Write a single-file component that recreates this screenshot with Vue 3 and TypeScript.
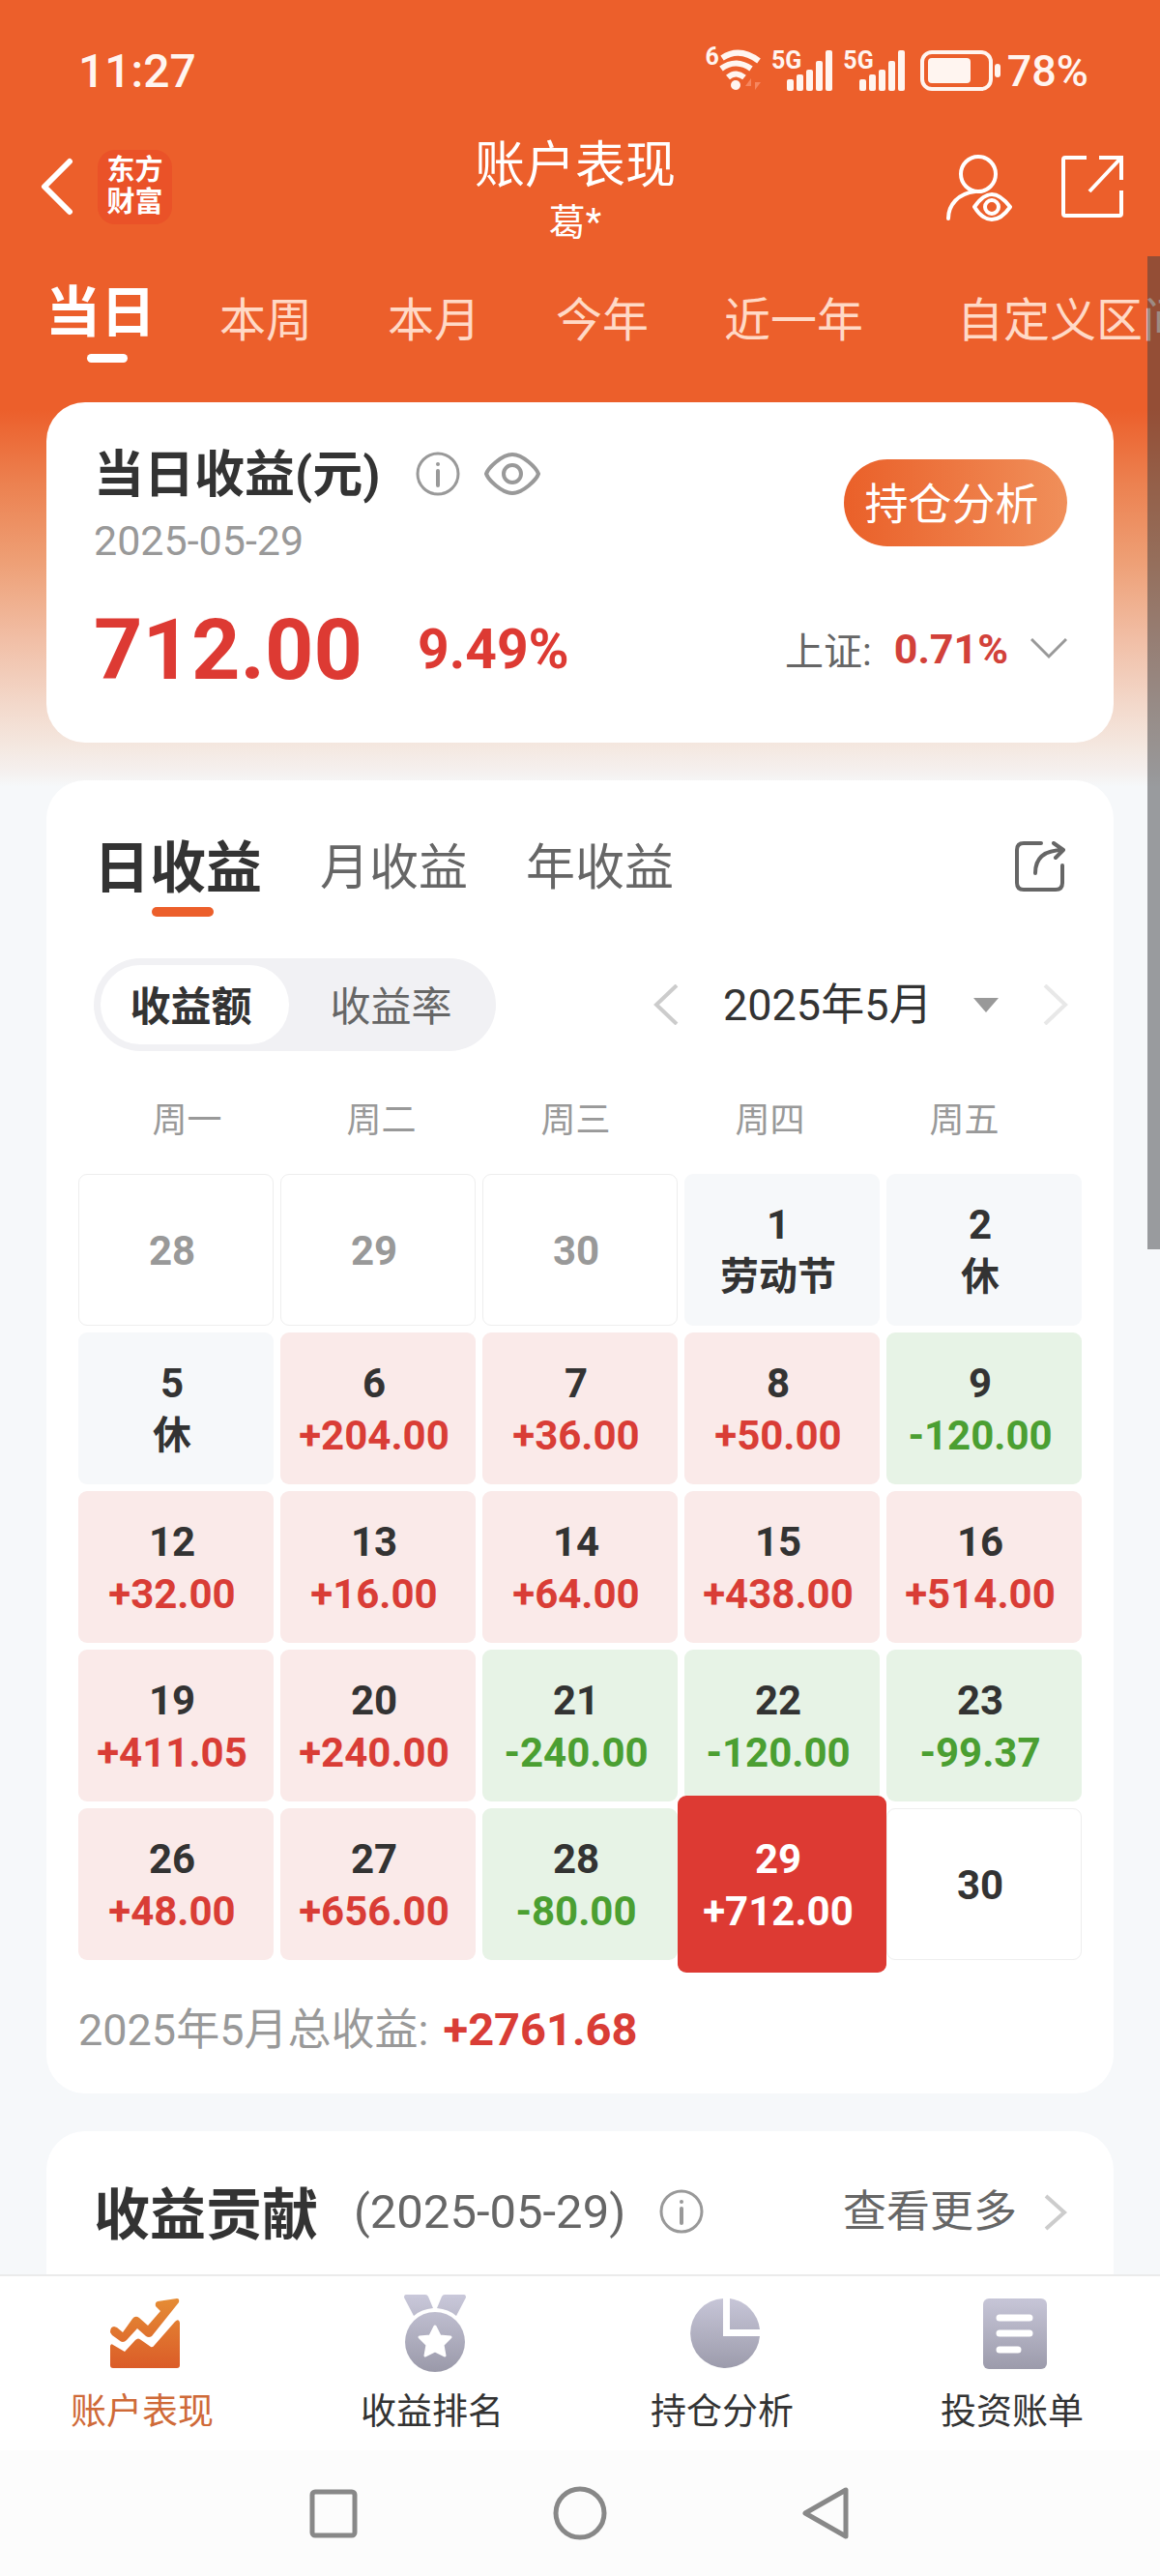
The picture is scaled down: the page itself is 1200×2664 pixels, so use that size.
<script setup lang="ts">
import { ref } from 'vue'

type Kind = 'out' | 'rest' | 'gain' | 'loss' | 'future'

interface Day {
  day: number
  note?: string
  kind: Kind
}

const periods: string[] = ['当日', '本周', '本月', '今年', '近一年', '自定义区间']
const period = ref('当日')

const reports: string[] = ['日收益', '月收益', '年收益']
const report = ref('日收益')

const units: string[] = ['收益额', '收益率']
const unit = ref('收益额')

const months: string[] = ['2025年3月', '2025年4月', '2025年5月']
const month = ref('2025年5月')

const weekdays: string[] = ['周一', '周二', '周三', '周四', '周五']

const amount = (day: number, value: number): Day => ({
  day,
  note: (value > 0 ? '+' : '') + value.toFixed(2),
  kind: value > 0 ? 'gain' : 'loss',
})

const days: Day[] = [
  { day: 28, kind: 'out' },
  { day: 29, kind: 'out' },
  { day: 30, kind: 'out' },
  { day: 1, note: '劳动节', kind: 'rest' },
  { day: 2, note: '休', kind: 'rest' },
  { day: 5, note: '休', kind: 'rest' },
  amount(6, 204),
  amount(7, 36),
  amount(8, 50),
  amount(9, -120),
  amount(12, 32),
  amount(13, 16),
  amount(14, 64),
  amount(15, 438),
  amount(16, 514),
  amount(19, 411.05),
  amount(20, 240),
  amount(21, -240),
  amount(22, -120),
  amount(23, -99.37),
  amount(26, 48),
  amount(27, 656),
  amount(28, -80),
  amount(29, 712),
  { day: 30, kind: 'future' },
]
const selected = ref(23)

const menu: { label: string; icon: string }[] = [
  { label: '账户表现', icon: 'chart' },
  { label: '收益排名', icon: 'medal' },
  { label: '持仓分析', icon: 'pie' },
  { label: '投资账单', icon: 'bill' },
]
</script>

<template>
  <div class="page">
    <div class="status">
      <span class="clock">11:27</span>
      <div class="signals">
        <span class="wifi-gen">6</span>
        <svg class="wifi" width="44" height="44" viewBox="0 0 44 44" fill="none" stroke="currentColor" stroke-width="6">
          <path d="M3 9Q21-3 41 12" />
          <path d="M2 20Q17 9 33 20" />
          <path d="M9 29Q17 22 26 29" />
          <circle cx="17" cy="37" r="5" fill="currentColor" stroke="none" />
          <path d="M33 42V30L27 38H33M37 30v12l6-8h-6" stroke="none" fill="#f6875f" />
        </svg>
        <div v-for="n in 2" :key="n" class="cell-signal">
          <span class="gen">5G</span>
          <svg width="48" height="44" viewBox="0 0 48 44" fill="currentColor">
            <rect x="0" y="31" width="7" height="12" rx="2" />
            <rect x="10" y="26" width="7" height="17" rx="2" />
            <rect x="20" y="21" width="7" height="22" rx="2" />
            <rect x="30" y="12" width="7" height="31" rx="2" />
            <rect x="40" y="1" width="7" height="42" rx="2" />
          </svg>
        </div>
        <svg class="battery" width="84" height="44" viewBox="0 0 84 44">
          <rect x="2" y="3" width="71" height="38" rx="10" fill="none" stroke="currentColor" stroke-width="4" />
          <rect x="8" y="9" width="44" height="26" rx="4" fill="currentColor" />
          <rect x="77" y="15" width="6" height="14" rx="3" fill="currentColor" />
        </svg>
        <span class="percent">78%</span>
      </div>
    </div>

    <header class="header">
      <div class="side">
        <button class="plain" aria-label="返回">
          <svg width="34" height="60" viewBox="0 0 34 60" fill="none" stroke="currentColor" stroke-width="6" stroke-linecap="round" stroke-linejoin="round">
            <path d="M30 4L4 30l26 26" />
          </svg>
        </button>
        <div class="brand"><span>东方</span><span>财富</span></div>
      </div>
      <div class="heading">
        <h1>账户表现</h1>
        <span class="owner">葛*</span>
      </div>
      <div class="side end">
        <button class="plain" aria-label="账户">
          <svg width="75" height="75" viewBox="0 0 75 75" fill="none" stroke="currentColor" stroke-width="4" stroke-linecap="round">
            <circle cx="37" cy="24" r="18" />
            <path d="M34 42C16 44 6 56 6 70" />
            <path d="M33 58Q42 45 51 45T70 58Q61 71 51 71T33 58Z" stroke-linejoin="round" />
            <circle cx="51" cy="58" r="7" />
          </svg>
        </button>
        <button class="plain" aria-label="分享">
          <svg width="68" height="68" viewBox="0 0 68 68" fill="none" stroke="currentColor" stroke-width="4">
            <path d="M28 4H6Q4 4 4 6V62Q4 64 6 64H62Q64 64 64 62V38" />
            <path d="M41 4H64V27M31 39L63 5" />
          </svg>
        </button>
      </div>
    </header>

    <nav class="periods">
      <button
        v-for="p in periods"
        :key="p"
        class="plain period"
        :class="{ active: p === period, custom: p === '自定义区间' }"
        @click="period = p"
      >
        {{ p }}
      </button>
    </nav>

    <main class="cards">
      <section class="card summary">
        <div class="summary-top">
          <div class="summary-name">
            <div class="title-row">
              <h2 class="summary-title">当日收益(元)</h2>
              <button class="plain grey" aria-label="说明">
                <svg width="46" height="46" viewBox="0 0 46 46" fill="none" stroke="currentColor">
                  <circle cx="23" cy="23" r="21" stroke-width="3" />
                  <path d="M23 20V35" stroke-width="4" stroke-linecap="round" />
                  <circle cx="23" cy="13" r="2" fill="currentColor" stroke="none" />
                </svg>
              </button>
              <button class="plain grey" aria-label="隐藏金额">
                <svg width="60" height="46" viewBox="0 0 60 46" fill="none" stroke="currentColor" stroke-width="4">
                  <path d="M3 23C5 17 19 3 30 3S55 17 57 23C55 29 41 43 30 43S5 29 3 23Z" />
                  <circle cx="30" cy="23" r="9" />
                </svg>
              </button>
            </div>
            <time class="date">2025-05-29</time>
          </div>
          <button class="analyse">持仓分析</button>
        </div>
        <div class="figures">
          <strong class="total">712.00</strong>
          <strong class="rate">9.49%</strong>
          <button class="plain index">
            <span>上证:</span>
            <strong>0.71%</strong>
            <svg width="38" height="22" viewBox="0 0 38 22" fill="none" stroke="#999" stroke-width="3">
              <path d="M1 1L19 19L37 1" />
            </svg>
          </button>
        </div>
      </section>

      <section class="card report">
        <div class="report-tabs">
          <button
            v-for="r in reports"
            :key="r"
            class="plain report-tab"
            :class="{ active: r === report }"
            @click="report = r"
          >
            {{ r }}
          </button>
          <button class="plain share" aria-label="分享收益">
            <svg width="52" height="52" viewBox="0 0 52 52" fill="none" stroke="currentColor" stroke-width="4" stroke-linecap="round" stroke-linejoin="round">
              <path d="M27 2H9Q2 2 2 9V43Q2 50 9 50H42Q49 50 49 43V25" />
              <path d="M21 33Q21 9 50 9M40 2L50 9L42 17" />
            </svg>
          </button>
        </div>

        <div class="controls">
          <div class="segment">
            <button v-for="u in units" :key="u" class="plain unit" :class="{ active: u === unit }" @click="unit = u">
              {{ u }}
            </button>
          </div>
          <div class="month">
            <button class="plain" aria-label="上个月">
              <svg width="26" height="42" viewBox="0 0 26 42" fill="none" stroke="#ccc" stroke-width="4">
                <path d="M24 1L3 21L24 41" />
              </svg>
            </button>
            <label class="month-pick">
              <select v-model="month" aria-label="选择月份">
                <option v-for="m in months" :key="m">{{ m }}</option>
              </select>
              <svg width="26" height="15" viewBox="0 0 26 15"><path d="M0 0H26L13 15Z" fill="#999" /></svg>
            </label>
            <button class="plain" aria-label="下个月">
              <svg width="26" height="42" viewBox="0 0 26 42" fill="none" stroke="#e8e8e8" stroke-width="4">
                <path d="M2 1L23 21L2 41" />
              </svg>
            </button>
          </div>
        </div>

        <div class="weekdays">
          <span v-for="w in weekdays" :key="w">{{ w }}</span>
        </div>
        <div class="calendar">
          <button
            v-for="(d, i) in days"
            :key="i"
            class="plain day"
            :class="[d.kind, { selected: i === selected }]"
            @click="selected = i"
          >
            <span>{{ d.day }}</span>
            <span v-if="d.note" class="note">{{ d.note }}</span>
          </button>
        </div>
        <p class="sum">{{ month }}总收益: <strong>+2761.68</strong></p>
      </section>

      <section class="card contribution">
        <h2>收益贡献</h2>
        <span class="on-date">(2025-05-29)</span>
        <button class="plain grey" aria-label="说明">
          <svg width="46" height="46" viewBox="0 0 46 46" fill="none" stroke="currentColor">
            <circle cx="23" cy="23" r="21" stroke-width="3" />
            <path d="M23 20V35" stroke-width="4" stroke-linecap="round" />
            <circle cx="23" cy="13" r="2" fill="currentColor" stroke="none" />
          </svg>
        </button>
        <a class="more" href="#">
          查看更多
          <svg width="24" height="38" viewBox="0 0 24 38" fill="none" stroke="#ccc" stroke-width="4">
            <path d="M2 2L21 19L2 36" />
          </svg>
        </a>
      </section>
    </main>

    <nav class="menu">
      <a v-for="(m, i) in menu" :key="m.icon" href="#" :class="{ active: i === 0 }">
        <svg v-if="m.icon === 'chart'" width="74" height="80" viewBox="0 0 74 80">
          <defs>
            <linearGradient id="warm" x1="0" y1="0" x2="0" y2="1" gradientUnits="objectBoundingBox">
              <stop offset="0" stop-color="#e58c35" />
              <stop offset="1" stop-color="#db5c28" />
            </linearGradient>
          </defs>
          <path
            fill="url(#warm)"
            d="M1 39Q1 33 5 33L8 34L14 39L24 25Q27 21 31 24L40 32L53 17L48 12Q47 8 50 7L70 4Q73 4 72 8L44 43Q41 45 38 43L29 35L18 47Q14 51 10 47L3 42ZM1 53Q2 50 4 52L16 59L27 47Q30 44 33 47L43 54Q45 55 47 52L68 28Q72 24 73 29V73Q73 76 70 76H4Q1 76 1 73Z"
          />
        </svg>
        <svg v-else-if="m.icon === 'medal'" width="64" height="80" viewBox="0 0 64 80">
          <defs>
            <linearGradient id="cool" x1="0" y1="0" x2="0" y2="80" gradientUnits="userSpaceOnUse">
              <stop offset="0" stop-color="#c9c8da" />
              <stop offset="1" stop-color="#9a99a9" />
            </linearGradient>
          </defs>
          <path fill="url(#cool)" d="M2 0H22Q24 0 25 2L30 14Q18 15 10 22L0 3Q0 0 2 0ZM62 0H42Q40 0 39 2L34 14Q46 15 54 22L64 3Q64 0 62 0Z" />
          <circle cx="32" cy="49" r="31" fill="url(#cool)" />
          <path fill="#fff" stroke="#fff" stroke-width="3" stroke-linejoin="round" d="M32 33L37 43L48 44L40 52L42 63L32 58L22 63L24 52L16 44L27 43Z" />
        </svg>
        <svg v-else-if="m.icon === 'pie'" width="74" height="80" viewBox="0 0 74 80" fill="url(#cool)">
          <path d="M35 4A36 36 0 1 0 73 43H35Z" />
          <path d="M42 4A36 36 0 0 1 73 36H42Z" />
        </svg>
        <svg v-else width="66" height="80" viewBox="0 0 66 80">
          <rect y="4" width="66" height="73" rx="6" fill="url(#cool)" />
          <path d="M17 24H48M17 40H48M17 57H36" stroke="#fff" stroke-width="7" stroke-linecap="round" />
        </svg>
        <span>{{ m.label }}</span>
      </a>
    </nav>

    <div class="system">
      <button class="plain" aria-label="最近任务">
        <svg width="56" height="56" viewBox="0 0 56 56" fill="none" stroke="currentColor" stroke-width="5">
          <rect x="6" y="6" width="44" height="45" rx="3" />
        </svg>
      </button>
      <button class="plain" aria-label="主屏幕">
        <svg width="56" height="56" viewBox="0 0 56 56" fill="none" stroke="currentColor" stroke-width="5">
          <circle cx="28" cy="28" r="25" />
        </svg>
      </button>
      <button class="plain" aria-label="后退">
        <svg width="56" height="56" viewBox="0 0 56 56" fill="none" stroke="currentColor" stroke-width="5" stroke-linejoin="round">
          <path d="M6 28L48 4V52Z" />
        </svg>
      </button>
    </div>

    <div class="scrollbar"></div>
  </div>
</template>

<style>
body {
  margin: 0;
}
</style>

<style scoped>
.page {
  position: relative;
  display: flex;
  flex-direction: column;
  min-height: 100vh;
  overflow: hidden;
  color: #333;
  background: #f6f8fa linear-gradient(
    #ec5f2b 424px,
    #ec8150 500px,
    #ee9f75 580px,
    #f1bea5 660px,
    #f3dacd 733px,
    #f4e7df 770px,
    #f5f1f0 800px,
    #f6f8fa 814px
  ) no-repeat;
  font-family: Roboto, "Noto Sans CJK SC", sans-serif;
}
h1, h2, p {
  margin: 0;
}
svg {
  display: block;
  flex: none;
}
.plain {
  padding: 0;
  border: 0;
  background: none;
  color: inherit;
  font: inherit;
  white-space: nowrap;
  cursor: pointer;
}
.grey {
  color: #999;
}

.status {
  display: flex;
  align-items: center;
  justify-content: space-between;
  height: 134px;
  padding: 6px 74px 0 81px;
  color: #fff5f0;
}
.clock {
  font-size: 48px;
  font-weight: 500;
}
.signals {
  display: flex;
  align-items: center;
}
.wifi-gen, .gen {
  align-self: flex-start;
  font-size: 25px;
  font-weight: 700;
  line-height: 24px;
}
.wifi {
  margin-right: 10px;
}
.cell-signal {
  display: flex;
  margin-right: 10px;
}
.gen {
  margin-right: -15px;
}
.battery {
  margin: 0 6px 0 5px;
}
.percent {
  font-size: 45px;
  font-weight: 500;
}

.header {
  display: grid;
  grid-template-columns: 1fr auto 1fr;
  align-items: start;
  padding: 0 36px 0 42px;
  color: #fff;
}
.side {
  display: flex;
  align-items: center;
  height: 106px;
  gap: 25px;
}
.end {
  justify-content: flex-end;
  gap: 46px;
}
.brand {
  display: flex;
  flex-direction: column;
  align-items: center;
  justify-content: center;
  width: 77px;
  height: 77px;
  border-radius: 18px;
  background: #ea5228;
  font-size: 29px;
  font-weight: 700;
  line-height: 33px;
}
.heading {
  display: flex;
  flex-direction: column;
  align-items: center;
  padding: 2px 16px 0 0;
}
h1 {
  font-size: 52px;
  font-weight: 400;
  line-height: 60px;
}
.owner {
  font-size: 38px;
  line-height: 56px;
}

.periods {
  display: flex;
  align-items: flex-start;
  padding: 32px 0 0 11px;
}
.period {
  display: flex;
  flex-direction: column;
  align-items: center;
  height: 126px;
  padding: 10px 39px 0;
  color: #ffd9c6;
  font-size: 48px;
  line-height: 64px;
}
.period.custom {
  padding-left: 58px;
}
.period.active {
  padding: 0 27px 0 36px;
  color: #fff;
  font-size: 57px;
  font-weight: 700;
  line-height: 68px;
}
.period.active::after {
  content: "";
  width: 42px;
  height: 9px;
  margin: 8px 0 0 14px;
  border-radius: 5px;
  background: #fff;
}

.cards {
  display: flex;
  flex: 1;
  flex-direction: column;
  gap: 39px;
  padding: 0 48px;
}
.card {
  border-radius: 40px;
  background: #fff;
}
.summary {
  padding: 42px 48px 45px 49px;
}
.summary-top {
  display: flex;
  align-items: flex-start;
  justify-content: space-between;
}
.title-row {
  display: flex;
  align-items: center;
  gap: 24px;
  height: 64px;
}
.summary-title {
  margin-right: 13px;
  padding-top: 4px;
  font-size: 52px;
  line-height: 64px;
}
.date {
  display: block;
  color: #999;
  font-size: 43px;
  line-height: 74px;
}
.analyse {
  width: 231px;
  height: 90px;
  margin-top: 17px;
  padding: 0 8px 4px 0;
  border: 0;
  border-radius: 45px;
  background: linear-gradient(90deg, #ea6029, #f08f5a);
  color: #fff;
  font: inherit;
  font-size: 45px;
  cursor: pointer;
}
.figures {
  display: flex;
  align-items: center;
  height: 104px;
  margin-top: 23px;
  color: #dd3a33;
}
.total {
  font-size: 88px;
}
.rate {
  margin-left: 57px;
  font-size: 57px;
}
.index {
  display: flex;
  align-items: center;
  gap: 23px;
  margin-left: auto;
  color: #666;
  font-size: 40px;
}
.index strong {
  color: #d2413a;
  font-size: 43px;
}

.report {
  padding: 58px 33px 33px;
}
.report-tabs {
  display: flex;
  align-items: flex-start;
  padding: 0 17px 0 16px;
}
.report-tab {
  display: flex;
  flex-direction: column;
  align-items: center;
  height: 83px;
  margin-right: 60px;
  color: #666;
  font-size: 51px;
  line-height: 66px;
}
.report-tab.active {
  color: #333;
  font-size: 58px;
  font-weight: 700;
}
.report-tab.active::after {
  content: "";
  width: 64px;
  height: 10px;
  margin: 7px 0 0 10px;
  border-radius: 5px;
  background: #ec5f2b;
}
.share {
  margin: 5px 0 0 auto;
  color: #666;
}
.controls {
  display: flex;
  align-items: center;
  justify-content: space-between;
  margin-top: 43px;
  padding: 0 14px 0 16px;
}
.segment {
  display: flex;
  padding: 7px;
  border-radius: 48px;
  background: #f1f1f4;
}
.unit {
  width: 195px;
  height: 82px;
  margin-right: 12px;
  padding: 0 8px 4px 0;
  border-radius: 41px;
  color: #666;
  font-size: 42px;
}
.unit:last-child {
  margin-right: 0;
}
.unit.active {
  background: #fff;
  color: #333;
  font-weight: 700;
}
.month, .month-pick {
  display: flex;
  align-items: center;
}
.month {
  gap: 46px;
}
.month-pick {
  gap: 42px;
}
select {
  appearance: none;
  padding: 0;
  border: 0;
  background: none;
  color: #333;
  font: inherit;
  font-size: 45px;
}
.weekdays {
  display: grid;
  grid-template-columns: repeat(5, 1fr);
  margin: 42px 21px 0 12px;
  color: #999;
  font-size: 36px;
  line-height: 60px;
  text-align: center;
}
.calendar {
  display: grid;
  grid-template-columns: repeat(5, 1fr);
  grid-auto-rows: 157px;
  gap: 7px;
  margin-top: 25px;
}
.day {
  display: flex;
  flex-direction: column;
  align-items: center;
  justify-content: center;
  padding: 2px 8px 0 0;
  border-radius: 9px;
  font-size: 42px;
  font-weight: 700;
  line-height: 54px;
}
.out, .future {
  border: 1px solid #eee;
}
.out {
  color: #999;
}
.rest {
  background: #f6f8fa;
}
.rest .note {
  font-size: 40px;
}
.gain {
  background: #faeae9;
}
.gain .note {
  color: #d93d36;
}
.loss {
  background: #e7f3e6;
}
.loss .note {
  color: #4b9f32;
}
.day.selected {
  z-index: 1;
  margin: -13px -7px;
  background: #dd3a33;
  color: #fff;
}
.selected .note {
  color: #fff;
}
.sum {
  margin-top: 40px;
  color: #999;
  font-size: 45px;
  line-height: 64px;
  word-break: keep-all;
}
.sum strong {
  margin-left: 4px;
  color: #d93d36;
  font-size: 47px;
}

.contribution {
  display: flex;
  flex: 1;
  align-items: flex-start;
  min-height: 94px;
  padding: 54px 48px 0 49px;
  border-radius: 40px 40px 0 0;
  line-height: 60px;
}
.contribution h2 {
  padding-top: 3px;
  font-size: 58px;
}
.on-date {
  margin: 0 35px 0 37px;
  color: #666;
  font-size: 49px;
}
.contribution .grey {
  margin-top: 6px;
}
.more {
  display: flex;
  align-items: center;
  gap: 28px;
  margin-left: auto;
  color: #666;
  font-size: 45px;
  text-decoration: none;
}

.menu {
  display: grid;
  grid-template-columns: repeat(4, 1fr);
  border-top: 2px solid #ebebeb;
  background: #fff;
}
.menu a {
  display: flex;
  flex-direction: column;
  align-items: center;
  padding: 19px 0 12px;
  color: #333;
  font-size: 37px;
  line-height: 48px;
  text-decoration: none;
}
.menu span {
  margin: 18px 6px 3px 0;
}
.menu .active {
  color: #cf6a38;
}
.system {
  display: flex;
  align-items: center;
  justify-content: center;
  gap: 199px;
  height: 130px;
  background: #fcfcfc;
  color: #888;
}
.scrollbar {
  position: absolute;
  top: 265px;
  right: 0;
  width: 13px;
  height: 1027px;
  background: rgba(60, 62, 66, 0.5);
}
</style>
